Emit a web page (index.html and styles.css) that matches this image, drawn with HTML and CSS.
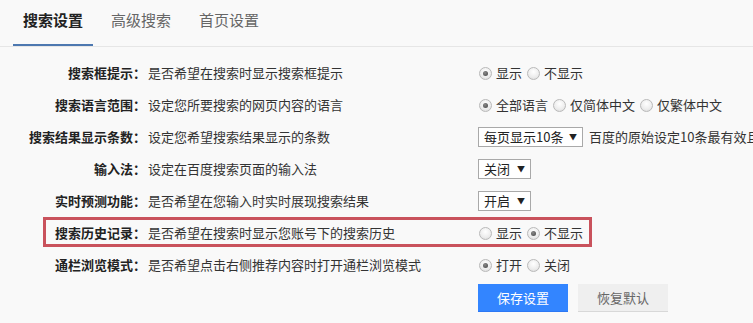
FILE: index.html
```html
<!DOCTYPE html>
<html lang="zh-CN">
<head>
<meta charset="utf-8">
<title>搜索设置</title>
<link rel="stylesheet" href="styles.css">
</head>
<body>
<div class="page">
  <nav class="tabs">
    <a class="tab active">搜索设置</a>
    <a class="tab">高级搜索</a>
    <a class="tab">首页设置</a>
  </nav>
  <div class="settings">
    <div class="row">
      <div class="label">搜索框提示：</div>
      <div class="desc">是否希望在搜索时显示搜索框提示</div>
      <div class="ctrl"><span class="radio on"></span><span class="opt">显示</span><span class="radio"></span><span class="opt">不显示</span></div>
    </div>
    <div class="row">
      <div class="label">搜索语言范围：</div>
      <div class="desc">设定您所要搜索的网页内容的语言</div>
      <div class="ctrl"><span class="radio on"></span><span class="opt">全部语言</span><span class="radio"></span><span class="opt">仅简体中文</span><span class="radio"></span><span class="opt">仅繁体中文</span></div>
    </div>
    <div class="row">
      <div class="label">搜索结果显示条数：</div>
      <div class="desc">设定您希望搜索结果显示的条数</div>
      <div class="ctrl"><span class="select wide">每页显示10条<span class="arrow">▼</span></span><span class="note">百度的原始设定10条最有效且快速</span></div>
    </div>
    <div class="row">
      <div class="label">输入法：</div>
      <div class="desc">设定在百度搜索页面的输入法</div>
      <div class="ctrl"><span class="select">关闭<span class="arrow">▼</span></span></div>
    </div>
    <div class="row">
      <div class="label">实时预测功能：</div>
      <div class="desc">是否希望在您输入时实时展现搜索结果</div>
      <div class="ctrl"><span class="select">开启<span class="arrow">▼</span></span></div>
    </div>
    <div class="row highlight">
      <div class="label">搜索历史记录：</div>
      <div class="desc">是否希望在搜索时显示您账号下的搜索历史</div>
      <div class="ctrl"><span class="radio"></span><span class="opt">显示</span><span class="radio on"></span><span class="opt">不显示</span></div>
    </div>
    <div class="row">
      <div class="label">通栏浏览模式：</div>
      <div class="desc">是否希望点击右侧推荐内容时打开通栏浏览模式</div>
      <div class="ctrl"><span class="radio on"></span><span class="opt">打开</span><span class="radio"></span><span class="opt">关闭</span></div>
    </div>
    <div class="actions">
      <button class="btn primary">保存设置</button>
      <button class="btn">恢复默认</button>
    </div>
  </div>
</div>
</body>
</html>
```
FILE: styles.css
```css
html, body {
  margin: 0;
  padding: 0;
  background: #f9f9f9;
  overflow: hidden;
}
body {
  font-family: "Noto Sans CJK SC", "Liberation Sans", sans-serif;
  font-size: 13px;
  color: #333;
}
.page {
  width: 753px;
  height: 323px;
  overflow: hidden;
}
.tabs {
  display: flex;
  height: 46px;
  padding-left: 13px;
  border-bottom: 1px solid #e6e6e6;
}
.tab {
  display: block;
  box-sizing: border-box;
  height: 46px;
  padding: 10px 10px 0;
  margin-right: 8px;
  font-size: 15px;
  line-height: 20px;
  color: #666;
  border-bottom: 2px solid transparent;
}
.tab.active {
  color: #222;
  font-weight: bold;
  border-bottom-color: #4d78b0;
}
.settings {
  padding-top: 10px;
}
.row {
  position: relative;
  display: grid;
  grid-template-columns: 146px 332px 275px;
  align-items: center;
  height: 32px;
  line-height: 18px;
  white-space: nowrap;
}
.row.highlight::after {
  content: "";
  position: absolute;
  left: 43px;
  top: 0;
  width: 549px;
  height: 30px;
  box-sizing: border-box;
  border: 3px solid #c9525c;
  pointer-events: none;
}
.label {
  text-align: right;
  font-weight: bold;
  color: #222;
}
.desc {
  padding-left: 2px;
  color: #333;
}
.ctrl {
  display: flex;
  align-items: center;
  overflow: hidden;
  color: #333;
}
.radio {
  position: relative;
  flex: none;
  width: 11px;
  height: 11px;
  border: 1px solid #b9b9b9;
  border-radius: 50%;
  background: radial-gradient(circle at 50% 35%, #ffffff 0%, #ececec 60%, #d6d6d6 100%);
  margin-right: 4px;
  margin-left: 1px;
}
.opt + .radio {
  margin-left: 5px;
}
.radio.on::after {
  content: "";
  position: absolute;
  left: 3px;
  top: 3px;
  width: 5px;
  height: 5px;
  border-radius: 50%;
  background: radial-gradient(circle at 40% 35%, #8a8a8a 0%, #444 100%);
}
.select {
  display: inline-flex;
  align-items: center;
  box-sizing: border-box;
  height: 20px;
  padding: 0 5px 0 5px;
  border: 1px solid #a9a9a9;
  background: #fff;
  color: #222;
  width: 53px;
  justify-content: space-between;
  flex: none;
}
.select.wide {
  width: 105px;
}
.arrow {
  font-size: 8px;
  color: #222;
}
.note {
  margin-left: 6px;
}
.actions {
  display: flex;
  gap: 10px;
  margin-top: 3px;
  padding-left: 478px;
}
.btn {
  width: 90px;
  height: 28px;
  border: 0;
  padding: 0;
  font-family: "Noto Sans CJK SC", sans-serif;
  font-size: 13px;
  background: #efefef;
  color: #666;
  border-bottom: 1px solid #d8d8d8;
}
.btn.primary {
  background: #3385ff;
  color: #fff;
  border-bottom-color: #2d78f4;
}
```
